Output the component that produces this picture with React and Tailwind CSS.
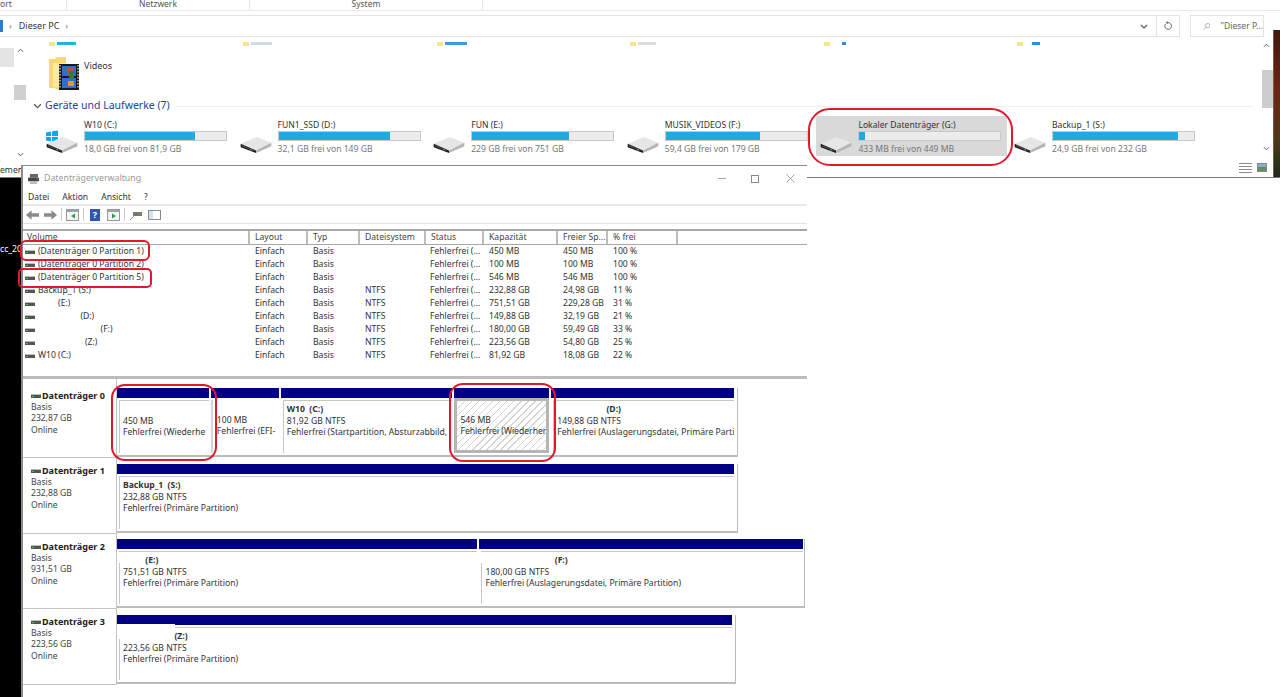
import React from 'react';

const font = "font-['Noto_Sans','Open_Sans',sans-serif]";

const drives = [
    { name: 'W10 (C:)', free: '18,0 GB frei von 81,9 GB', used: 78, win: true },
    { name: 'FUN1_SSD (D:)', free: '32,1 GB frei von 149 GB', used: 79 },
    { name: 'FUN (E:)', free: '229 GB frei von 751 GB', used: 69 },
    { name: 'MUSIK_VIDEOS (F:)', free: '59,4 GB frei von 179 GB', used: 67 },
    { name: 'Lokaler Datenträger (G:)', free: '433 MB frei von 449 MB', used: 4, selected: true },
    { name: 'Backup_1 (S:)', free: '24,9 GB frei von 232 GB', used: 89 },
];

const volumes = [
    ['(Datenträger 0 Partition 1)', '', '450 MB', '450 MB', '100 %'],
    ['(Datenträger 0 Partition 2)', '', '100 MB', '100 MB', '100 %'],
    ['(Datenträger 0 Partition 5)', '', '546 MB', '546 MB', '100 %'],
    ['Backup_1 (S:)', 'NTFS', '232,88 GB', '24,98 GB', '11 %'],
    ['         (E:)', 'NTFS', '751,51 GB', '229,28 GB', '31 %'],
    ['                   (D:)', 'NTFS', '149,88 GB', '32,19 GB', '21 %'],
    ['                            (F:)', 'NTFS', '180,00 GB', '59,49 GB', '33 %'],
    ['                     (Z:)', 'NTFS', '223,56 GB', '54,80 GB', '25 %'],
    ['W10 (C:)', 'NTFS', '81,92 GB', '18,08 GB', '22 %'],
];

const headers = ['Volume', 'Layout', 'Typ', 'Dateisystem', 'Status', 'Kapazität', 'Freier Sp...', '% frei', ''];
const cols = 'grid grid-cols-[227px_58px_52px_66px_58px_74px_50px_70px_1fr]';

const disks = [
    {
        name: 'Datenträger 0', size: '232,87 GB', h: 'h-[79px]', pt: 'pt-[9px]', labelPt: 'pt-[11px]', w: 'w-[621px]', pr: 'pr-[3px]',
        parts: [
            { w: 'w-[92px]', lines: ['', '450 MB', 'Fehlerfrei (Wiederhe'] },
            { w: 'w-[68px]', lines: ['', '100 MB', 'Fehlerfrei (EFI-'], flush: true },
            { w: 'w-[172px]', lines: ['W10  (C:)', '81,92 GB NTFS', 'Fehlerfrei (Startpartition, Absturzabbild,'] },
            { w: 'w-[95px]', lines: ['', '546 MB', 'Fehlerfrei (Wiederher'], hatch: true },
            { w: 'w-[183px]', lines: ['                      (D:)', '149,88 GB NTFS', 'Fehlerfrei (Auslagerungsdatei, Primäre Parti'] },
        ],
    },
    {
        name: 'Datenträger 1', size: '232,88 GB', h: 'h-[76px]', pt: 'pt-[6px]', labelPt: 'pt-[7px]', w: 'w-[621px]', pr: 'pr-[3px]',
        parts: [{ w: 'flex-1', lines: ['Backup_1  (S:)', '232,88 GB NTFS', 'Fehlerfrei (Primäre Partition)'] }],
    },
    {
        name: 'Datenträger 2', size: '931,51 GB', h: 'h-[75px]', pt: 'pt-[5px]', labelPt: 'pt-[7px]', w: 'w-[688px]', pr: 'pr-[1px]',
        parts: [
            { w: 'w-[361px]', lines: ['          (E:)', '751,51 GB NTFS', 'Fehlerfrei (Primäre Partition)'], gap: true },
            { w: 'w-[324px]', lines: ['                               (F:)', '180,00 GB NTFS', 'Fehlerfrei (Auslagerungsdatei, Primäre Partition)'], cut: true, gap: true },
        ],
    },
    {
        name: 'Datenträger 3', size: '223,56 GB', h: 'h-[76px]', pt: 'pt-[6px]', labelPt: 'pt-[7px]', w: 'w-[619px]', pr: 'pr-[3px]',
        parts: [{ w: 'flex-1', lines: ['                       (Z:)', '223,56 GB NTFS', 'Fehlerfrei (Primäre Partition)'], patch: true, gap: true }],
    },
];

function DriveIcon({ className }) {
    return (
        <svg viewBox="0 0 90 50" className={className}>
            <path d="M0 23 L47 3 L90 20 L45 43 Z" fill="#e6e6e6" />
            <path d="M0 23 L45 43 L45 50 L0 33 Z" fill="#1c1c1c" />
            <path d="M4 28 L41 44 L41 45 L4 30 Z" fill="#777" />
            <path d="M45 43 L90 20 L90 30 L45 50 Z" fill="#b4b4b4" />
            <rect x="28" y="39" width="5" height="3" fill="#43d13a" />
        </svg>
    );
}

function MiniDisk() {
    return (
        <svg viewBox="0 0 10 4" className="w-[10px] h-[4px] shrink-0">
            <rect width="10" height="4" fill="#555" />
            <rect y="0" width="10" height="1" fill="#bbb" />
            <rect x="1" y="2" width="2" height="1" fill="#3c3" />
        </svg>
    );
}

function Chevron({ up, className }) {
    return (
        <svg viewBox="0 0 8 5" className={className} fill="none" stroke="#555" strokeWidth="1.1">
            <path d={up ? 'M1 4 L4 1 L7 4' : 'M1 1 L4 4 L7 1'} />
        </svg>
    );
}

function Ring({ className }) {
    return <div className={`absolute border-2 border-[#e2182c] pointer-events-none ${className}`} />;
}

function Drive({ d }) {
    return (
        <div className="w-[193.6px] shrink-0 h-[40px] text-[8.6px] leading-[13px]">
            <div className={`h-[40px] flex items-center ${d.selected ? 'bg-[#d9d9d9] ml-[4px] w-[191px]' : ''}`}>
                <div className={`relative h-[40px] shrink-0 ${d.selected ? 'w-[42px]' : 'w-[46px]'}`}>
                    {d.win && (
                        <svg viewBox="0 0 12 12" className="absolute left-[8px] top-[14px] w-[12px] h-[13px]">
                            <path d="M0 2 L5 1 V5.6 H0 Z M6 .8 L12 0 V5.6 H6 Z M0 6.4 H5 V11 L0 10 Z M6 6.4 H12 V12 L6 11.2 Z" fill="#12a5ee" />
                        </svg>
                    )}
                    <DriveIcon className={`absolute top-[20px] w-[32px] h-[17px] ${d.selected ? 'left-[4px]' : 'left-[8px]'}`} />
                </div>
                <div className="w-[143px] shrink-0">
                    <div className="text-[#333] h-[11px] whitespace-nowrap">{d.name}</div>
                    <div className="h-[10px] mt-[1px] bg-[#ececec] border border-[#c9c9c9]">
                        <div className="h-full bg-[#22a9de]" style={{ width: `${d.used}%` }} />
                    </div>
                    <div className="text-[#777] h-[11px] mt-[2px] whitespace-nowrap">{d.free}</div>
                </div>
            </div>
        </div>
    );
}

function bodyClass(p) {
    if (p.hatch) return 'border-[3px] border-[#b5b5b5] pl-[3px] pt-[2px] bg-[repeating-linear-gradient(135deg,#d4d4d4_0,#d4d4d4_1px,#fff_1px,#fff_5px)]';
    if (p.flush) return 'mt-[2px] pt-[3px] pl-[4px] border-l-2 border-[#d6d6d6]';
    return 'mt-[2px] ml-[2px] border-t border-l border-[#c6c6c6] pt-[3px] pl-[3px]';
}

function Partition({ p }) {
    return (
        <div className={`${p.w} relative flex flex-col min-w-0`}>
            <div className="h-[10px] bg-[#000080] shrink-0" />
            <div className={`flex-1 min-h-0 overflow-hidden whitespace-pre text-[#333] leading-[11.5px] ${bodyClass(p)}`}>
                {p.lines.map((line, i) => (
                    <div key={i} className={`h-[11.5px] ${i === 0 ? 'font-bold' : ''}`}>{line}</div>
                ))}
            </div>
            {p.cut && <div className="absolute left-[5px] top-[26px] w-[70px] h-[3px] bg-white" />}
            {p.gap && <div className="absolute left-0 top-[13px] w-[4px] h-[11px] bg-white" />}
            {p.patch && <div className="absolute left-0 top-[9px] w-[58px] h-[4px] bg-white" />}
        </div>
    );
}

function DiskRow({ disk }) {
    return (
        <div className={`flex ${disk.h} shrink-0`}>
            <div className={`w-[94px] shrink-0 border-r border-b border-[#c4c4c4] pl-[8px] ${disk.labelPt} leading-[11.5px] text-[#444]`}>
                <div className="flex items-center gap-[1px] font-bold text-[#222] text-[9px]"><MiniDisk />{disk.name}</div>
                <div>Basis</div>
                <div>{disk.size}</div>
                <div>Online</div>
            </div>
            <div className={`${disk.pt} pb-[1px]`}>
                <div className={`${disk.w} h-full flex gap-[2px] border-r border-b-2 border-[#bcbcbc] ${disk.pr} pb-[2px]`}>
                    {disk.parts.map((p, i) => <Partition key={i} p={p} />)}
                </div>
            </div>
        </div>
    );
}

function Explorer() {
    return (
        <div className="h-[178px] shrink-0 flex flex-col bg-white border-b border-[#777] relative">
            <div className="h-[11px] shrink-0 flex border-b border-[#e8e8e8] text-[8.5px] leading-[8px] text-[#555] overflow-hidden">
                <div className="w-[67px] border-r border-[#e6e6e6] text-left">ort</div>
                <div className="w-[183px] border-r border-[#e6e6e6] text-center">Netzwerk</div>
                <div className="w-[233px] border-r border-[#e6e6e6] text-center">System</div>
            </div>
            <div className="h-[26px] shrink-0 flex items-center pt-[4px]">
                <div className="w-[1180px] h-[22px] border border-l-0 border-[#e3e3e3] flex items-center text-[9px] text-[#333]">
                    <div className="w-[3px] h-[12px] bg-[#2b7cd3]" />
                    <span className="ml-[6px] text-[#777]">›</span>
                    <span className="ml-[7px]">Dieser PC</span>
                    <span className="ml-[6px] text-[#777]">›</span>
                    <div className="flex-1" />
                    <Chevron className="w-[8px] h-[5px] mr-[8px]" />
                    <div className="w-[23px] h-full border-l border-[#e3e3e3] flex items-center justify-center">
                        <svg viewBox="0 0 12 12" className="w-[10px] h-[10px]" fill="none" stroke="#666" strokeWidth="1.2">
                            <path d="M3 3.5 A4 4 0 1 0 6 2 H4 M5.5 .5 L4 2 L5.5 3.5" />
                        </svg>
                    </div>
                </div>
                <div className="ml-[10px] w-[74px] h-[22px] border border-[#e3e3e3] flex items-center text-[8.6px] text-[#666]">
                    <svg viewBox="0 0 12 12" className="w-[9px] h-[9px] ml-[12px]" fill="none" stroke="#888" strokeWidth="1">
                        <circle cx="7.5" cy="4.5" r="3.5" /><path d="M5 7 L1 11" />
                    </svg>
                    <span className="ml-[10px] whitespace-nowrap">"Dieser P...</span>
                </div>
            </div>
            <div className="flex-1 flex relative">
                <div className="w-[34px] shrink-0" />
                <div className="flex-1 flex flex-col min-w-0">
                    <div className="h-[5px] shrink-0">
                        {[15, 209, 403, 596, 790, 983].map((x, i) => (
                            <div key={i} className="absolute top-[5px] h-[4px] flex gap-[2px]" style={{ left: x + 34 }}>
                                <div className="w-[6px] h-[4px] bg-[#f6e58d]" />
                                <div className={`h-[3px] ${i === 0 ? 'w-[19px] bg-[#1fb6d8]' : i === 1 ? 'w-[21px] bg-[#cfdbe6]' : i === 2 ? 'w-[22px] bg-[#3b9bdc]' : i === 3 ? 'w-[18px] bg-[#dcdcdc]' : i === 4 ? 'w-[4px] ml-[10px] bg-[#2b8ee0]' : 'w-[8px] ml-[7px] bg-[#2b8ee0]'}`} />
                            </div>
                        ))}
                    </div>
                    <div className="flex h-[57px] pl-[15px] pt-[15px] shrink-0 text-[9px] text-[#333]">
                        <svg viewBox="0 0 31 33" className="w-[31px] h-[33px] shrink-0">
                            <path d="M0 2 H6 L8 0 H17 V8 H10 V33 L5 31 H0 Z" fill="#f8d775" />
                            <path d="M4 6 H17 V10 H10 V30 L4 30 Z" fill="#fbe7a6" />
                            <rect x="10" y="7" width="20" height="26" fill="#1a1a1a" />
                            <path d="M11 8 V32 M29 8 V32" stroke="#ddd" strokeWidth="1.2" strokeDasharray="1.5 1.5" />
                            <rect x="13" y="9" width="14" height="10" fill="#2f6fd0" />
                            <rect x="13" y="21" width="14" height="10" fill="#2f6fd0" />
                            <rect x="18" y="11" width="7" height="6" fill="#b8572a" />
                            <rect x="20" y="14" width="5" height="8" fill="#3a7a2a" />
                            <rect x="19" y="24" width="6" height="5" fill="#d8a02a" />
                        </svg>
                        <span className="ml-[4px] mt-[2px]">Videos</span>
                    </div>
                    <div className="h-[14px] shrink-0 flex items-center">
                        <Chevron className="w-[9px] h-[6px] -ml-[1px]" />
                        <span className="ml-[3px] text-[10.5px] text-[#2a3f8f] whitespace-nowrap">Geräte und Laufwerke (7)</span>
                        <div className="ml-[6px] flex-1 mr-[6px] h-[1px] bg-[#eeeeee]" />
                    </div>
                    <div className="flex mt-[3px] pl-[4px]">
                        {drives.map(d => <Drive key={d.name} d={d} />)}
                    </div>
                </div>
                <div className="w-[14px] shrink-0 flex flex-col items-center pt-[6px]">
                    <Chevron up className="w-[7px] h-[5px]" />
                    <div className="w-[11px] h-[38px] bg-[#cdcdcd] mt-[22px] self-end" />
                    <Chevron className="w-[7px] h-[5px] mt-[38px]" />
                </div>
                <div className="w-[7px] shrink-0 border-l border-[#2b6fb0] bg-[linear-gradient(180deg,#3a1a14,#6a2418_40%,#4a3a1c_75%,#2a2420)] -mt-[7px]" />
                <div className="absolute left-0 top-[11px] w-[14px] h-[19px] bg-[#e4e4e4]" />
                <div className="absolute left-[14px] top-[48px] w-[12px] h-[15px] bg-[#d0d0d0]" />
                <Chevron up className="absolute left-[17px] top-[11px] w-[7px] h-[5px]" />
                <Chevron className="absolute left-[17px] top-[115px] w-[7px] h-[5px]" />
                <div className="absolute left-[1239px] top-[126px] flex gap-[5px]">
                    <div className="w-[13px] h-[10px] bg-[repeating-linear-gradient(180deg,#8a8a8a_0,#8a8a8a_1px,#fff_1px,#fff_3px)]" />
                    <div className="w-[10px] h-[9px] border border-[#888] bg-[linear-gradient(180deg,#7fb3d5_50%,#6a8a5a_50%)]" />
                </div>
            </div>
        </div>
    );
}

function ToolIcon({ children }) {
    return <div className="w-[16px] h-[14px] flex items-center justify-center">{children}</div>;
}

function PaneIcon({ flip }) {
    return (
        <svg viewBox="0 0 13 12" className="w-[13px] h-[12px]">
            <rect x=".5" y=".5" width="12" height="11" fill="#f4f4f4" stroke="#999" />
            <rect x="1" y="1" width="11" height="2" fill="#9aa4ad" />
            <path d={flip ? 'M5 4.5 L9 7 L5 9.5 Z' : 'M9 4.5 L5 7 L9 9.5 Z'} fill="#2f9e4f" />
        </svg>
    );
}

function Toolbar() {
    return (
        <div className="h-[18px] shrink-0 flex items-center gap-[2px] pl-[3px] border-b border-[#e2e2e2]">
            <svg viewBox="0 0 14 10" className="w-[13px] h-[10px]"><path d="M0 5 L6 0 V3 H14 V7 H6 V10 Z" fill="#8a8a8a" /></svg>
            <svg viewBox="0 0 14 10" className="w-[13px] h-[10px] ml-[3px]"><path d="M14 5 L8 0 V3 H0 V7 H8 V10 Z" fill="#8a8a8a" /></svg>
            <div className="w-px h-[13px] bg-[#c8c8c8] ml-[2px]" />
            <ToolIcon><PaneIcon /></ToolIcon>
            <div className="w-px h-[13px] bg-[#c8c8c8] mx-[1px]" />
            <ToolIcon><div className="w-[10px] h-[12px] bg-[#2d55b5] text-white text-[9px] leading-[12px] text-center font-bold">?</div></ToolIcon>
            <ToolIcon><PaneIcon flip /></ToolIcon>
            <div className="w-px h-[13px] bg-[#c8c8c8] mx-[1px]" />
            <ToolIcon>
                <svg viewBox="0 0 12 10" className="w-[12px] h-[10px]"><path d="M3 2 H12 V6 H3 Z" fill="#777" /><path d="M0 10 L4 6" stroke="#999" /><rect x="9" y="3" width="2" height="1" fill="#3c3" /></svg>
            </ToolIcon>
            <ToolIcon><div className="w-[13px] h-[10px] border border-[#888] bg-[linear-gradient(90deg,#cfe3f5_35%,#fff_35%)]" /></ToolIcon>
        </div>
    );
}

function VolumeList() {
    return (
        <div className="h-[150px] shrink-0 mt-[5px] border-b-[3px] border-[#bdbdbd] overflow-hidden">
            <div className={`${cols} h-[16px] border-y border-[#a8a8a8] border-t-2 text-[#444] leading-[13px]`}>
                {headers.map((h, i) => (
                    <div key={i} className={`${i === 0 ? 'pl-[4px]' : 'pl-[5px]'} ${i < 8 ? 'border-r-2 border-[#bdbdbd]' : ''} whitespace-nowrap`}>{h}</div>
                ))}
            </div>
            <div className="text-[#333]">
                {volumes.map((v, i) => (
                    <div key={i} className={`${cols} h-[13px] leading-[13px]`}>
                        <div className="pl-[2px] flex items-center gap-[3px] whitespace-pre"><MiniDisk />{v[0]}</div>
                        <div className="pl-[5px]">Einfach</div>
                        <div className="pl-[5px]">Basis</div>
                        <div className="pl-[5px]">{v[1]}</div>
                        <div className="pl-[4px] whitespace-nowrap">Fehlerfrei (...</div>
                        <div className="pl-[5px] whitespace-nowrap">{v[2]}</div>
                        <div className="pl-[5px] whitespace-nowrap">{v[3]}</div>
                        <div className="pl-[5px] whitespace-nowrap">{v[4]}</div>
                    </div>
                ))}
            </div>
        </div>
    );
}

function DiskWindow() {
    return (
        <div className="absolute left-[21px] top-[165px] w-[786px] h-[532px] bg-white border-t border-l-2 border-[#8a8a8a] flex flex-col text-[8.6px]">
            <div className="h-[25px] shrink-0 flex items-center pl-[5px]">
                <svg viewBox="0 0 12 11" className="w-[11px] h-[10px]">
                    <rect x="2" y="0" width="9" height="4" fill="#666" />
                    <rect x="0" y="4" width="12" height="4" fill="#444" />
                    <rect x="2" y="8" width="8" height="3" fill="#bbb" />
                    <rect x="9" y="5" width="2" height="1" fill="#3c3" />
                </svg>
                <span className="ml-[5px] text-[#999] text-[8.8px]">Datenträgerverwaltung</span>
                <div className="flex-1" />
                <div className="w-[8px] h-px bg-[#aaa] mr-[25px]" />
                <div className="w-[8px] h-[8px] border border-[#888] mr-[27px]" />
                <svg viewBox="0 0 9 9" className="w-[9px] h-[9px] mr-[12px]" fill="none" stroke="#888" strokeWidth=".8"><path d="M.5 .5 L8.5 8.5 M8.5 .5 L.5 8.5" /></svg>
            </div>
            <div className="h-[15px] shrink-0 flex items-center gap-[13px] pl-[5px] text-[#333] border-b-2 border-[#e8e8e8] pb-[1px]">
                <span>Datei</span><span>Aktion</span><span>Ansicht</span><span>?</span>
            </div>
            <Toolbar />
            <VolumeList />
            <div className="flex-1 flex flex-col">
                {disks.map(d => <DiskRow key={d.name} disk={d} />)}
            </div>
        </div>
    );
}

export default function App() {
    return (
        <div className={`relative w-[1280px] h-[697px] overflow-hidden bg-white flex flex-col ${font}`}>
            <Explorer />
            <div className="flex-1 w-[21px] bg-black relative">
                <span className="absolute left-0 top-[65px] text-[8.6px] text-white whitespace-nowrap">cc_20</span>
            </div>
            <span className="absolute left-0 top-[164px] text-[8.6px] text-[#333] whitespace-nowrap">emen</span>
            <DiskWindow />
            <Ring className="left-[808px] top-[108px] w-[205px] h-[58px] rounded-[22px]" />
            <Ring className="left-[20px] top-[240px] w-[130px] h-[21px] rounded-[6px]" />
            <Ring className="left-[18px] top-[268px] w-[134px] h-[20px] rounded-[5px]" />
            <Ring className="left-[111px] top-[384px] w-[106px] h-[77px] rounded-[14px]" />
            <Ring className="left-[449px] top-[383px] w-[107px] h-[79px] rounded-[14px]" />
        </div>
    );
}
